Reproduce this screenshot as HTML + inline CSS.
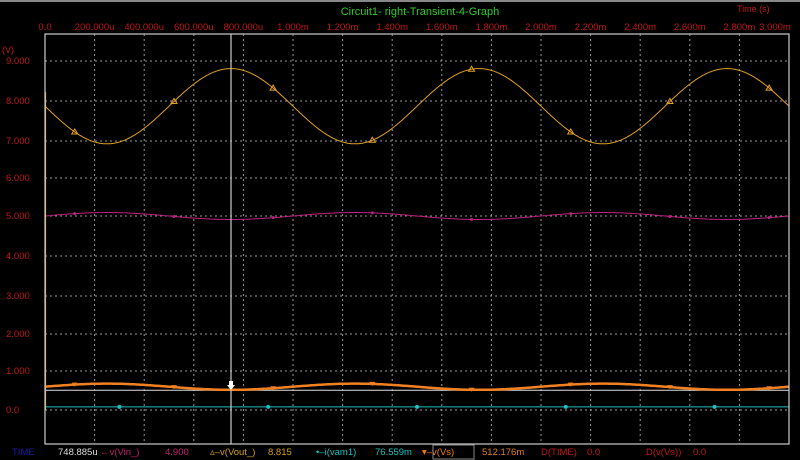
<!DOCTYPE html>
<html><head><style>
html,body{margin:0;padding:0;background:#000;width:800px;height:460px;overflow:hidden;font-family:"Liberation Sans",sans-serif}
</style></head><body>
<svg id="s" width="800" height="460" xmlns="http://www.w3.org/2000/svg" style="position:absolute;left:0;top:0">
<rect x="0" y="0" width="800" height="460" fill="#000"/>
<rect x="0" y="0" width="800" height="2" fill="#888"/>
<text x="420" y="15" fill="#2ecc2e" font-size="11" text-anchor="middle">Circuit1- right-Transient-4-Graph</text>
<text x="737" y="12" fill="#c0161b" font-size="9">Time   (s)</text>
<g id="g"></g>
<g font-size="9" fill="#c0161b">
<text x="2" y="53">(V)</text>
</g>
<g font-size="9.5">
<text x="12" y="455" fill="#1a1aa8">TIME</text>
<text x="58" y="455" fill="#ddd">748.885u</text>
<text x="100" y="455" fill="#c02070">←v(Vin_)</text>
<text x="165" y="455" fill="#c02070">4.900</text>
<text x="210" y="455" fill="#d4a010">▵–v(Vout_)</text>
<text x="268" y="455" fill="#d4a010">8.815</text>
<text x="316" y="455" fill="#20c0c0">•–i(vam1)</text>
<text x="375" y="455" fill="#20c0c0">76.559m</text>
<text x="422" y="455" fill="#f08010">▾–v(Vs)</text>
<rect x="433" y="445" width="41" height="14" fill="none" stroke="#888" stroke-width="1"/>
<text x="482" y="455" fill="#e08020">512.176m</text>
<text x="541" y="455" fill="#c0161b">D(TIME)</text>
<text x="587" y="455" fill="#c0161b">0.0</text>
<text x="646" y="455" fill="#c0161b">D(v(Vs))</text>
<text x="693" y="455" fill="#c0161b">0.0</text>
</g>
</svg>
<script>
var g=document.getElementById('g'),h='';
var L=45,R=789,T=34,B=444;
function X(t){return L+(R-L)*t/3e-3}
function Y(v){return 410-38.8*v}
for(var i=1;i<15;i++){var x=X(i*2e-4);h+='<line x1="'+x+'" y1="'+T+'" x2="'+x+'" y2="'+B+'" stroke="#999" stroke-width="1" stroke-dasharray="2,3"/>';}
var ys=[61,101,141,178,216,256,296,334,371,410],lv=['9.000','8.000','7.000','6.000','5.000','4.000','3.000','2.000','1.000','0.0'];
for(var i=0;i<10;i++){h+='<line x1="'+L+'" y1="'+ys[i]+'" x2="'+R+'" y2="'+ys[i]+'" stroke="#999" stroke-width="1" stroke-dasharray="2,3"/>';h+='<text x="6" y="'+(ys[i]+3)+'" fill="#c0161b" font-size="9.5">'+lv[i]+'</text>';}
var xl=['0.0','200.000u','400.000u','600.000u','800.000u','1.000m','1.200m','1.400m','1.600m','1.800m','2.000m','2.200m','2.400m','2.600m','2.800m','3.000m'];
for(var i=0;i<16;i++){var x=X(i*2e-4);h+='<text x="'+(i==15?x-14:x)+'" y="30" fill="#c0161b" font-size="9.5" text-anchor="middle">'+xl[i]+'</text>';}
function curve(f,c,w){var p='';for(var k=0;k<=600;k++){var t=3e-3*k/600;p+=(k?'L':'M')+X(t).toFixed(1)+' '+Y(f(t)).toFixed(1);}return '<path d="'+p+'" fill="none" stroke="'+c+'" stroke-width="'+w+'"/>';}
var P=2*Math.PI/1e-3;
var vout=function(t){return 7.83+0.97*Math.sin(P*(t-0.5e-3))};
var vin=function(t){return 5.0+0.09*Math.cos(P*(t-0.25e-3))};
var vs=function(t){return 0.6+0.08*Math.cos(P*(t-0.25e-3))};
var ia=function(t){return 0.08};
h+='<line x1="'+L+'" y1="'+Y(0.51)+'" x2="'+R+'" y2="'+Y(0.51)+'" stroke="#ddd" stroke-width="1"/>';
h+=curve(vin,'#c02080',1);
h+=curve(vout,'#e0a020',1);
h+=curve(vs,'#f08020',2.5);
h+=curve(ia,'#20c0c0',1);
h+='<line x1="45.5" y1="'+Y(8.2)+'" x2="45.5" y2="'+Y(0)+'" stroke="#e0a020" stroke-width="1.2"/>';
for(var k=0;k<8;k++){var t=(0.12+0.4*k)*1e-3;var x=X(t);
h+='<path d="M'+(x-3)+' '+(Y(vout(t))+2)+'L'+x+' '+(Y(vout(t))-3)+'L'+(x+3)+' '+(Y(vout(t))+2)+'Z" fill="none" stroke="#e0a020"/>';
h+='<circle cx="'+x+'" cy="'+Y(vin(t))+'" r="1.5" fill="#c02080"/>';
h+='<path d="M'+(x-3)+' '+(Y(vs(t))-2)+'L'+(x+3)+' '+(Y(vs(t))-2)+'L'+x+' '+(Y(vs(t))+2)+'Z" fill="#f08020"/>';}
for(var k=0;k<7;k++){var x=X((0.3+0.6*k)*1e-3);h+='<circle cx="'+x+'" cy="'+Y(0.08)+'" r="2" fill="#20c0c0"/>';}
h+='<line x1="231" y1="'+T+'" x2="231" y2="'+B+'" stroke="#ccc" stroke-width="1.2"/>';
h+='<path d="M229 381h4v4h2l-4 5-4-5h2z" fill="#fff"/>';
h+='<rect x="'+L+'" y="'+T+'" width="'+(R-L)+'" height="'+(B-T)+'" fill="none" stroke="#ccc" stroke-width="1.2"/>';
g.innerHTML=h;
</script>
</body></html>
